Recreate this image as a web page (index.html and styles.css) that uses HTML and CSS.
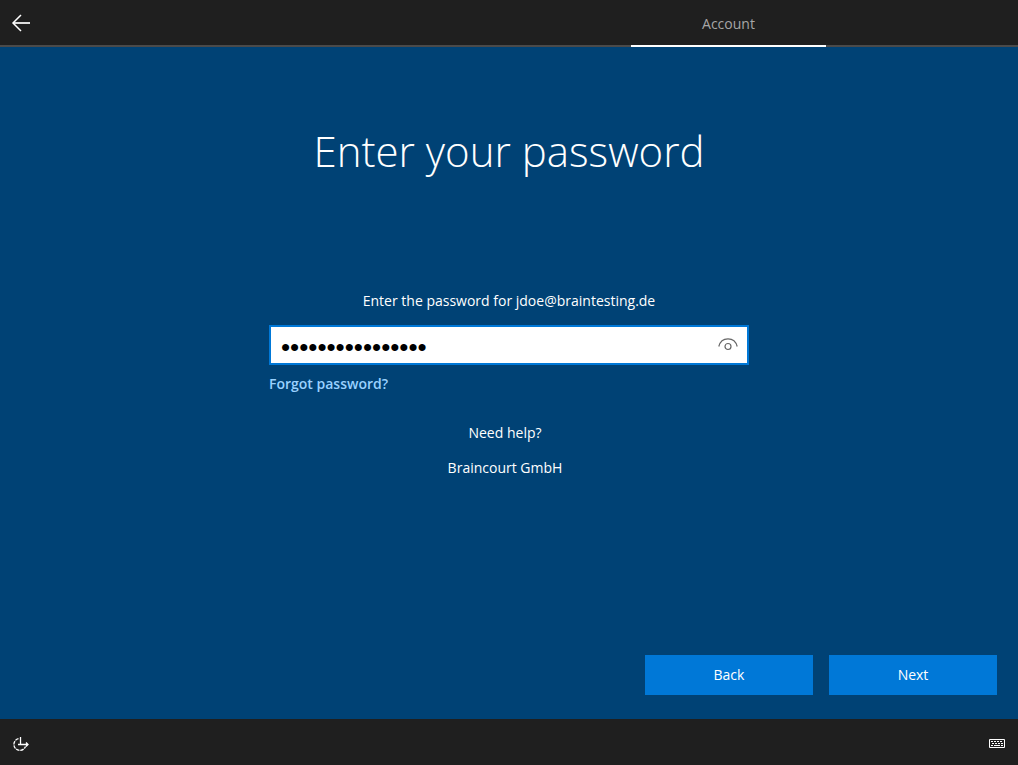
FILE: index.html
```html
<!DOCTYPE html>
<html lang="en">
<head>
<meta charset="utf-8">
<meta name="viewport" content="width=device-width, initial-scale=1">
<title>Enter your password</title>
<link rel="stylesheet" href="styles.css">
</head>
<body>
<header class="topbar">
  <button class="icon-button" type="button" aria-label="Go back">
    <svg width="20" height="18" viewBox="0 0 20 18" fill="none" stroke="#fff"><path d="M19 9H2" stroke="#ddd" stroke-width="2"/><path d="M10 1L2 9l8 8" stroke-width="1.500"/></svg>
  </button>
  <nav class="tabs"><a class="tab" href="#account" aria-current="step">Account</a></nav>
</header>
<main class="content">
  <h1 class="title">Enter your password</h1>
  <form class="form" id="signin">
    <label class="prompt" for="password">Enter the password for jdoe@braintesting.de</label>
    <div class="field">
      <input class="password" id="password" type="password" value="abcdefghijklmnop">
      <button class="reveal" type="button" aria-label="Show password">
        <svg width="20" height="14" viewBox="0 0 20 14" fill="none" stroke="#666" stroke-width="1.200"><path d="M.8 9.500C2 4.500 5.500 1.800 10 1.800s8 2.700 9.200 7.700"/><circle cx="10" cy="9.500" r="3"/></svg>
      </button>
    </div>
    <a class="forgot" href="#forgot">Forgot password?</a>
    <div class="help">
      <p class="help-line">Need help?</p>
      <p class="help-line">Braincourt GmbH</p>
    </div>
  </form>
  <div class="actions">
    <button class="action" type="button">Back</button>
    <button class="action" type="submit" form="signin">Next</button>
  </div>
</main>
<footer class="bottombar">
  <button class="icon-button" type="button" aria-label="Ease of access">
    <svg width="18" height="16" viewBox="0 0 18 16" fill="none" stroke="#fff" stroke-width="1.300"><path d="M6.500 2.600a6 6 0 1 0 7 8" stroke-dasharray="3.600 .8"/><path d="M8.500 1v7.500H16M6 8.500h3M14 6.500l2 2-2 2"/></svg>
  </button>
  <button class="icon-button" type="button" aria-label="On-screen keyboard">
    <svg width="16" height="9" viewBox="0 0 16 9" fill="none" stroke="#fff"><path d="M.5.500h15v8H.5z"/><path d="M2 2.500h12M3 4.500h11" stroke-dasharray="2 1"/><path d="M2 6.500h2M5 6.500h6M12 6.500h2"/></svg>
  </button>
</footer>
</body>
</html>
```
FILE: styles.css
```css
* {
  box-sizing: border-box;
}

body {
  display: flex;
  flex-direction: column;
  min-height: 100vh;
  margin: 0;
  background: #004275;
  color: #fff;
  font-family: "Open Sans", "Noto Sans", sans-serif;
  font-size: 14px;
  line-height: 20px;
}

button,
input {
  font: inherit;
}

button {
  border: 0;
  cursor: pointer;
}

svg {
  display: block;
}

.topbar,
.bottombar {
  display: flex;
  justify-content: space-between;
  background: #1f1f1f;
}

.topbar {
  height: 47px;
  padding-right: 192px;
  box-shadow: inset 0 -2px #4a4a4a;
}

.topbar .icon-button {
  padding-bottom: 2px;
}

.bottombar {
  height: 46px;
  padding: 3px 0 0;
}

.icon-button {
  display: flex;
  align-items: center;
  justify-content: center;
  width: 42px;
  padding: 0;
  background: none;
}

.tabs {
  display: flex;
}

.tab {
  width: 195px;
  padding-top: 14px;
  border-bottom: 2px solid #fff;
  color: #a6a6a6;
  text-align: center;
  text-decoration: none;
}

.content {
  display: flex;
  flex: 1;
  flex-direction: column;
  align-items: center;
  padding: 72px 21px 24px;
}

.title {
  margin: 0;
  font-size: 42px;
  font-weight: 300;
  line-height: 64px;
}

.form {
  display: flex;
  flex-direction: column;
  width: 100%;
  max-width: 480px;
  margin-top: 108px;
}

.prompt {
  text-align: center;
}

.field {
  display: flex;
  height: 40px;
  margin-top: 14px;
  border: 2px solid #0078d7;
  background: #fff;
}

.password {
  flex: 1;
  min-width: 0;
  padding: 4px 10px 0;
  border: 0;
  outline: 0;
  background: none;
  color: #000;
  font-family: "Liberation Sans", sans-serif;
  font-size: 26px;
}

.reveal {
  padding: 0 9px 3px;
  background: none;
}

.forgot {
  align-self: flex-start;
  margin-top: 9px;
  color: #99d1ff;
  font-weight: 600;
  text-decoration: none;
}

.help {
  display: flex;
  flex-direction: column;
  gap: 15px;
  margin-top: 29px;
  padding-right: 8px;
  text-align: center;
}

.help-line {
  margin: 0;
}

.actions {
  display: flex;
  gap: 16px;
  align-self: flex-end;
  margin-top: auto;
}

.action {
  width: 168px;
  height: 40px;
  background: #0078d7;
  color: #fff;
}
```
